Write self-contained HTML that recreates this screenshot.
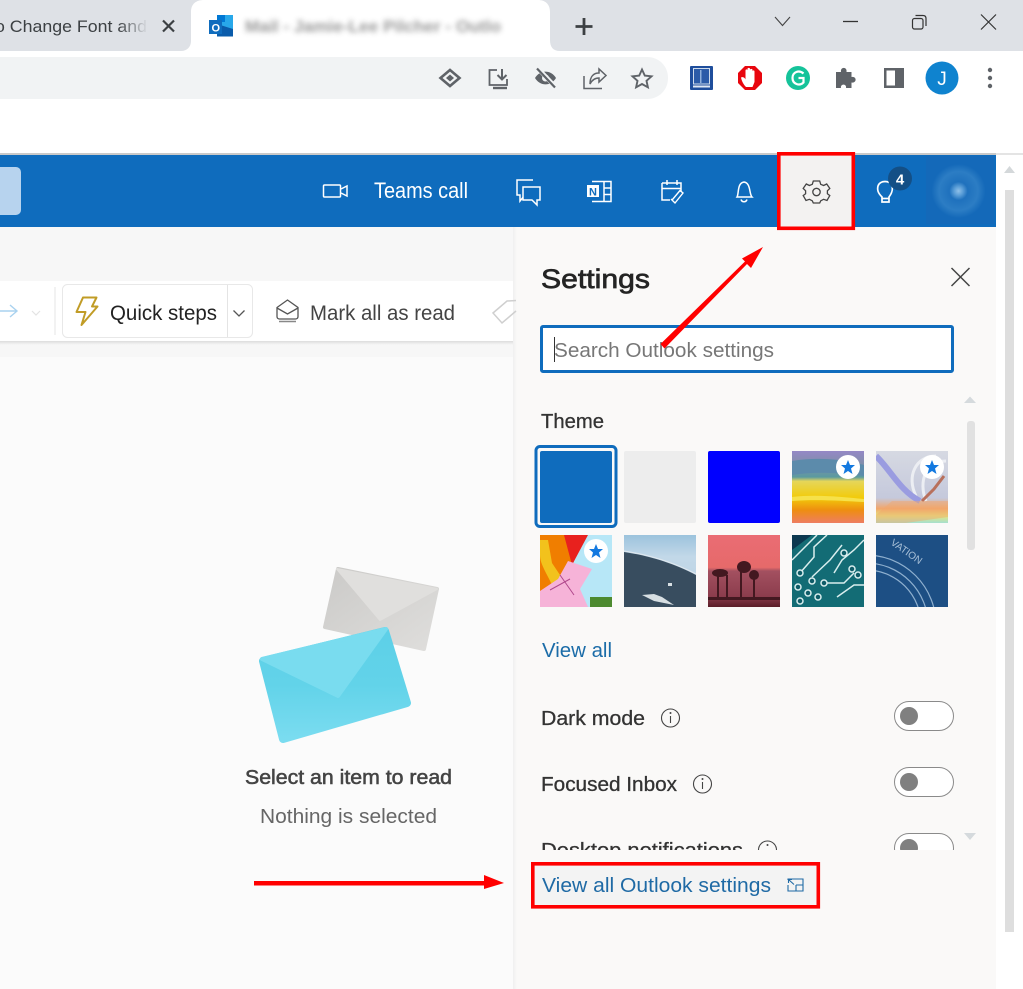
<!DOCTYPE html>
<html lang="en"><head><meta charset="utf-8"><title>Settings</title>
<style>html,body{margin:0;padding:0;background:#fff;overflow:hidden}svg{display:block}text{font-family:"Liberation Sans",sans-serif}</style></head>
<body>
<svg xmlns="http://www.w3.org/2000/svg" width="1023" height="989" viewBox="0 0 1023 989">
<defs>
<linearGradient id="fade" x1="0" x2="1" y1="0" y2="0"><stop offset="0" stop-color="#dee1e6" stop-opacity="0"/><stop offset="1" stop-color="#dee1e6"/></linearGradient>
<linearGradient id="sh" x1="0" x2="0" y1="0" y2="1"><stop offset="0" stop-color="#ddd"/><stop offset="1" stop-color="#f8f8f8"/></linearGradient>
<linearGradient id="ps" x1="0" x2="1" y1="0" y2="0"><stop offset="0" stop-color="#f0f0f0"/><stop offset="1" stop-color="#faf9f8"/></linearGradient>
<linearGradient id="g1" x1="0" x2="1" y1="0" y2="1"><stop offset="0" stop-color="#cbcac8"/><stop offset="1" stop-color="#dfdedc"/></linearGradient>
<linearGradient id="b1" x1="0" x2="0" y1="0" y2="1"><stop offset="0" stop-color="#5dd0e8"/><stop offset=".5" stop-color="#62d3e9"/><stop offset="1" stop-color="#7adcf0"/></linearGradient>
<radialGradient id="av"><stop offset="0" stop-color="#90c0e8"/><stop offset=".16" stop-color="#5c9fd8"/><stop offset=".34" stop-color="#1f71bd"/><stop offset=".72" stop-color="#2c7dc4"/><stop offset="1" stop-color="#1469b9"/></radialGradient>
<linearGradient id="t4" x1="0" x2="0" y1="0" y2="1"><stop offset="0" stop-color="#9588c6"/><stop offset=".2" stop-color="#7f8fa8"/><stop offset=".36" stop-color="#5a9aa0"/><stop offset=".42" stop-color="#e5d65a"/><stop offset=".65" stop-color="#f2cb0a"/><stop offset=".82" stop-color="#ee8e10"/><stop offset="1" stop-color="#ee7d62"/></linearGradient>
<linearGradient id="t5" x1="0" x2="0" y1="0" y2="1"><stop offset="0" stop-color="#d6d9e2"/><stop offset=".65" stop-color="#c5c9dc"/><stop offset=".8" stop-color="#f2a66b"/><stop offset=".9" stop-color="#e3e580"/><stop offset="1" stop-color="#a6e0d0"/></linearGradient>
<linearGradient id="t8" x1="0" x2="0" y1="0" y2="1"><stop offset="0" stop-color="#ea6c74"/><stop offset=".45" stop-color="#e66a6a"/><stop offset=".5" stop-color="#a35060"/><stop offset=".85" stop-color="#8c3d4d"/><stop offset="1" stop-color="#5a1e28"/></linearGradient>
<linearGradient id="t7" x1="0" x2="0" y1="0" y2="1"><stop offset="0" stop-color="#9cc3dd"/><stop offset=".3" stop-color="#c2d8e8"/><stop offset="1" stop-color="#bcd2e2"/></linearGradient>
<filter id="bl" x="-5%" y="-50%" width="110%" height="200%"><feGaussianBlur stdDeviation="2.6"/></filter>
<clipPath id="dclip"><rect x="516" y="800" width="470" height="50"/></clipPath>
</defs>

<!-- Chrome tab strip -->
<rect width="1023" height="51" fill="#dee1e6"/>
<path d="M181 51C187 51 191 47 191 41V12C191 4 196 0 204 0H538C545 0 550 4 550 12V40C550 47 553 51 560 51Z" fill="#fff"/>
<text x="-5" y="32" font-size="17" fill="#3c4043" textLength="152" lengthAdjust="spacingAndGlyphs">o Change Font and</text>
<rect x="118" y="12" width="30" height="28" fill="url(#fade)"/>
<path d="M163 20.500L174 31.500M174 20.500L163 31.500" stroke="#3c4043" stroke-width="2.200"/>
<!-- Outlook logo -->
<rect x="217" y="15" width="16" height="14" fill="#28a8ea"/><rect x="217" y="15" width="8" height="7" fill="#0078d4"/><path d="M217 24L233 29V36.500H217Z" fill="#0a5cab"/><rect x="209" y="20" width="13" height="14" fill="#0f6cbd"/>
<text x="211.500" y="31.500" font-size="11" font-weight="bold" fill="#fff">O</text>
<text x="245" y="32" font-size="17" font-weight="bold" fill="#555" filter="url(#bl)" textLength="256" lengthAdjust="spacingAndGlyphs" opacity=".6">Mail - Jamie-Lee Pilcher - Outlo</text>
<path d="M584 18V35M575.500 26.500H592.500" stroke="#3c4043" stroke-width="2.800"/>
<path d="M775 17L782.500 25.500L790 17" fill="none" stroke="#444" stroke-width="1.100"/>
<path d="M843 21.500H858" stroke="#333" stroke-width="1.300"/>
<g fill="none" stroke="#333" stroke-width="1.200"><rect x="912.500" y="18.500" width="10.500" height="10.500" rx="2"/><path d="M915.500 15.500H923C925 15.500 926 16.500 926 18.500V26"/></g>
<path d="M981 14.500L996 29.500M996 14.500L981 29.500" stroke="#333" stroke-width="1.200"/>

<!-- Omnibox -->
<path d="M0 57H647C659 57 668 66 668 78S659 99 647 99H0Z" fill="#f1f3f4"/>
<g fill="none" stroke="#5f6368">
<path d="M450 70L459.500 78L450 86L440.500 78Z" stroke-width="2.600"/><path d="M450 74.500L454 78L450 81.500L446 78Z" fill="#5f6368" stroke="none"/>
<path d="M497 70H489.500V85H507V79" stroke-width="1.800"/><path d="M502 69V79M497.500 75L502 79.500L506.500 75" stroke-width="2"/><path d="M493 88H507" stroke-width="2.400"/>
<path d="M535 78C540 69.500 551 69.500 556 78C551 86.500 540 86.500 535 78Z" fill="#5f6368" stroke="none"/><circle cx="545.500" cy="78" r="3.500" fill="#f1f3f4" stroke="none"/><path d="M538 68.500L556 87.500" stroke="#f1f3f4" stroke-width="4.500"/><path d="M537 68.500L555 87.500" stroke-width="2.200"/>
<path d="M584 76V88.500H602M590 84C590 76 594 73 599 73V69L606 75.500L599 82V78C595 78 592 80 590 84Z" stroke-width="1.500"/>
<path d="M642 69.500L644.800 75.600L651.500 76.300L646.500 80.800L647.900 87.300L642 84L636.100 87.300L637.500 80.800L632.500 76.300L639.200 75.600Z" stroke-width="1.900"/>
</g>
<!-- Extensions -->
<rect x="690" y="66" width="23" height="24" rx="1" fill="#1f4e9c"/><rect x="693.500" y="68.500" width="16" height="15.500" fill="#2b5ba8" stroke="#cfdcec"/><rect x="700" y="70" width="1.500" height="13" fill="#8fb0dc"/><rect x="693" y="85.500" width="17" height="2" fill="#dfe8f3"/>
<path d="M745 66H755L762 73V83L755 90H745L738 83V73Z" fill="#e8060e"/>
<path d="M746 87C743 84 741.500 80 741 77.500C743 76.500 745 78 745.500 79.500V70.500C745.500 69 747.500 69 747.500 70.500V69C747.500 67.500 750 67.500 750 69V70C750 68.500 752.500 68.500 752.500 70V71.500C752.500 70 754.500 70 754.500 71.500V82L752.500 87Z" fill="#fff"/>
<circle cx="798" cy="78" r="12" fill="#15c39a"/><path d="M803.500 73.500C799 69.500 792.500 72 792.500 78S799.500 86.500 803.500 82.500V78H798.500" fill="none" stroke="#fff" stroke-width="2.200"/>
<path d="M836 72H841C840 66.500 847.500 66.500 846.500 72H851.500V77C857 76 857 83.500 851.500 82.500V88H846C847 83.500 840 83.500 841 88H836Z" fill="#5f6368"/>
<rect x="884" y="68" width="20" height="20" fill="#5f6368"/><rect x="886.500" y="70.500" width="8.500" height="15" fill="#fff"/>
<circle cx="942" cy="78" r="16.500" fill="#0f83cf"/><text x="942" y="85" font-size="19" fill="#fff" text-anchor="middle">J</text>
<g fill="#5f6368"><circle cx="990" cy="70" r="2.200"/><circle cx="990" cy="78" r="2.200"/><circle cx="990" cy="86" r="2.200"/></g>

<!-- Page -->
<rect y="153" width="996" height="2" fill="#c9c9c9"/><rect x="996" y="153" width="27" height="2" fill="#e4e4e4"/>
<rect y="155" width="996" height="72" fill="#0f6cbd"/>
<rect x="-8" y="167" width="29" height="48" rx="5" fill="#b7d3ee"/>
<rect y="227" width="516" height="762" fill="#f7f7f7"/>
<rect y="357" width="516" height="632" fill="#fbfbfb"/>
<rect y="281" width="516" height="60" fill="#fff"/>
<rect y="341" width="516" height="4" fill="url(#sh)"/>
<rect x="516" y="227" width="480" height="762" fill="#faf9f8"/>
<rect x="513" y="227" width="4" height="762" fill="url(#ps)"/>
<!-- Scrollbar -->
<rect x="1005" y="190" width="9" height="742" fill="#dedede"/>
<path d="M1004 173L1009.500 166L1015 173Z" fill="#d4d8da"/>

<!-- Header icons -->
<g fill="none" stroke="#fff" stroke-width="1.500">
<rect x="323.500" y="185" width="17" height="12" rx="1"/><path d="M341 189L347 186V196L341 193"/>
<path d="M533 180H517V195H520V201L525 195" /><path d="M523 187H540V200H537V205L532 200H523Z" fill="#0f6cbd"/>
<path d="M592 181.500H611V201.500H592" /><path d="M604 182V201M604 188H611M604 194.500H611"/>
<path d="M662 183H681V192M662 183V200H670M662 188.500H681M667 180V185M677 180V185"/><path d="M671 199L675 203L683 193L680 190.500L672.500 199.500" stroke-width="1.400"/>
<path d="M737 197C739 194 737 183 744 182C751 183 749 194 752 197ZM741 199.500C742 202.500 746 202.500 747 199.500"/>
</g>
<rect x="587" y="185" width="12" height="12" fill="#fff"/><text x="589" y="195.500" font-size="11" font-weight="bold" fill="#0f6cbd">N</text>
<text x="374" y="198" font-size="22" fill="#fff" textLength="94" lengthAdjust="spacingAndGlyphs">Teams call</text>

<!-- Gear -->
<rect x="779" y="154" width="74" height="74" fill="#f3f2f1"/>
<g fill="none" stroke="#444" stroke-width="1.300"><path d="M813.300 181H819.700L820.700 184.300L823.600 185.500L826.700 184L829.800 188.400L827.400 190.800V193.700L829.800 195.600L827 200.500L823.600 199.300L820.700 200.800L819.700 203H813.300L812.300 200.800L809.400 199.300L806 200.500L803.200 195.600L805.600 193.700V190.800L803.200 188.400L806.300 184L809.400 185.500L812.300 184.300Z"/><circle cx="816.500" cy="192" r="3.700"/></g>
<rect x="778.800" y="153.800" width="74.500" height="74.500" fill="none" stroke="#f00" stroke-width="3.600"/>

<!-- Bulb + badge -->
<g fill="none" stroke="#fff" stroke-width="1.700"><path d="M882 197C878 193 877 190 878 186C880 180 890 180 892 186C893 190 892 193 889 197V202H882Z"/><path d="M882 198.500H889"/></g>
<circle cx="900" cy="178.500" r="12" fill="#134f86"/><text x="900" y="184.500" font-size="15" font-weight="bold" fill="#fff" text-anchor="middle">4</text>

<!-- Avatar -->
<rect x="926" y="156" width="68" height="68" fill="#1469b9"/>
<circle cx="958.500" cy="191" r="27" fill="url(#av)"/>

<!-- Ribbon -->
<path d="M0 311H16M10 305L17 311L10 317" fill="none" stroke="#a9d2ef" stroke-width="1.400"/>
<path d="M32 311L36 315L40 311" fill="none" stroke="#e3e3e3" stroke-width="1.200"/>
<rect x="54.500" y="287" width="1" height="48" fill="#e6e6e6"/>
<rect x="62.500" y="284.500" width="190" height="53" rx="5" fill="#fff" stroke="#e8e8e8"/>
<rect x="227" y="285" width="1" height="52" fill="#e4e4e4"/>
<path d="M83 297.500H96.500L92 306.500H97.500L81.500 325L85.500 312H76.500Z" fill="none" stroke="#c19c26" stroke-width="2" stroke-linejoin="round"/>
<text x="110" y="320" font-size="21" fill="#222" textLength="107" lengthAdjust="spacingAndGlyphs">Quick steps</text>
<path d="M233.500 310.500L239 316L244.500 310.500" fill="none" stroke="#555" stroke-width="1.300"/>
<g fill="none" stroke="#555" stroke-width="1.300"><path d="M277 307.500L287.500 300L298 307.500V316.500C298 318 297 319 295.500 319H279.500C278 319 277 318 277 316.500Z"/><path d="M277 308L287.500 314L298 308"/><path d="M279 321.500H296" stroke="#888" stroke-width="1.500"/></g>
<text x="310" y="320" font-size="21" fill="#444" textLength="145" lengthAdjust="spacingAndGlyphs">Mark all as read</text>
<path d="M516 300.500L507 301L493 313L502 323L516 311" fill="none" stroke="#cfcfcf" stroke-width="1.500"/>

<!-- Envelopes -->
<path d="M338 569L437 589L424 649L325 627Z" fill="url(#g1)" stroke="url(#g1)" stroke-width="4" stroke-linejoin="round"/>
<path d="M337 569L437 589L380 620Z" fill="#e0dfdd" stroke="#e0dfdd" stroke-width="2" stroke-linejoin="round"/>
<path d="M263 661L385 631L407 703L283 739Z" fill="url(#b1)" stroke="url(#b1)" stroke-width="8" stroke-linejoin="round"/>
<path d="M262 659L386 629L338 696Z" fill="#79dcef" stroke="#79dcef" stroke-width="4" stroke-linejoin="round"/>
<text x="245" y="784" font-size="20" fill="#444" stroke="#444" stroke-width=".55" textLength="207" lengthAdjust="spacingAndGlyphs">Select an item to read</text>
<text x="260" y="823" font-size="20" fill="#666" textLength="177" lengthAdjust="spacingAndGlyphs">Nothing is selected</text>

<!-- Settings panel -->
<text x="541" y="288" font-size="27" fill="#242424" stroke="#242424" stroke-width=".7" textLength="109" lengthAdjust="spacingAndGlyphs">Settings</text>
<path d="M951.500 268L969.500 286M969.500 268L951.500 286" stroke="#444" stroke-width="1.500"/>
<rect x="541.500" y="326.500" width="411" height="45" rx="1.500" fill="#fff" stroke="#0f6cbd" stroke-width="3"/>
<rect x="554" y="337" width="1" height="25" fill="#333"/>
<text x="554" y="357" font-size="20" fill="#777" textLength="220" lengthAdjust="spacingAndGlyphs">Search Outlook settings</text>
<text x="541" y="428" font-size="20.500" fill="#333" stroke="#333" stroke-width=".3" textLength="63" lengthAdjust="spacingAndGlyphs">Theme</text>
<path d="M964 403L970 396.500L976 403Z" fill="#d5dadd"/>
<rect x="967" y="421" width="8" height="129" rx="3" fill="#e1e1e1"/>
<path d="M964 833H976L970 840Z" fill="#d5dadd"/>

<!-- Themes -->
<rect x="536" y="446.500" width="80" height="80" rx="4" fill="none" stroke="#0f6cbd" stroke-width="3"/>
<rect x="540" y="451" width="72" height="72" rx="2" fill="#0f6cbd"/>
<rect x="624" y="451" width="72" height="72" rx="2" fill="#ededed"/>
<rect x="708" y="451" width="72" height="72" rx="2" fill="#0000ff"/>
<svg x="792" y="451" width="72" height="72"><rect width="72" height="72" fill="url(#t4)"/><path d="M0 10C25 6 50 8 72 14V25C50 22 25 20 0 24Z" fill="#5c8bab"/><path d="M0 46C25 43 50 46 72 48V51C50 50 25 48 0 50Z" fill="#f6e14a"/></svg>
<svg x="876" y="451" width="72" height="72"><rect width="72" height="72" fill="url(#t5)"/><path d="M60 5C40 5 30 25 40 45M70 10C50 10 42 30 50 50" fill="none" stroke="#eceef3" stroke-width="3"/><path d="M0 5C14 18 24 40 44 50" fill="none" stroke="#9a9ce0" stroke-width="6"/><path d="M68 25L58 38L46 50" fill="none" stroke="#b8705c" stroke-width="3"/><path d="M0 64L16 50L72 50V66L30 72H0Z" fill="#f2a66b" opacity=".45"/></svg>
<svg x="540" y="535" width="72" height="72"><rect width="72" height="72" fill="#b7e7f7"/><path d="M0 0H46L34 26L20 60L0 60Z" fill="#f07e00"/><path d="M24 0H48L32 30Z" fill="#e8211e"/><path d="M0 5H8L12 28L28 52L18 62C8 40 0 30 0 20Z" fill="#f2c21c"/><path d="M0 56L18 44L28 26L52 34L40 54L48 72H0Z" fill="#f6b3d8"/><rect x="50" y="62" width="22" height="10" fill="#4d8a30"/><path d="M20 40L34 60M10 55L30 44" stroke="#b0488c" fill="none"/></svg>
<svg x="624" y="535" width="72" height="72"><rect width="72" height="72" fill="url(#t7)"/><path d="M0 17C20 20 45 26 72 40V72H0Z" fill="#384d5f"/><path d="M0 16C20 19 45 25 72 39" fill="none" stroke="#e0e8ee" stroke-width="1"/><path d="M18 60L30 59L38 62L50 70L30 66Z" fill="#d7dfe3"/><rect x="44" y="48" width="4" height="3" fill="#d7dfe3"/></svg>
<svg x="708" y="535" width="72" height="72"><rect width="72" height="72" fill="url(#t8)"/><g fill="#431820"><ellipse cx="36" cy="32" rx="7" ry="6"/><ellipse cx="46" cy="40" rx="5" ry="5"/><ellipse cx="12" cy="38" rx="8" ry="4"/><rect x="32" y="34" width="2" height="30"/><rect x="45" y="42" width="2" height="22"/><rect x="9" y="40" width="2" height="24"/><rect x="18" y="40" width="2" height="24"/><rect x="0" y="62" width="72" height="3"/></g></svg>
<svg x="792" y="535" width="72" height="72"><rect width="72" height="72" fill="#136c75"/><path d="M0 0H20L0 15Z" fill="#0c3850"/><g fill="none" stroke="#d9eeee" stroke-width="1.500"><path d="M0 25L25 0M8 38L22 22V12L35 0M20 42L38 25L50 10M42 38L50 25L62 15L72 5M32 48L52 48L62 38M45 62L62 50L72 50"/></g><g fill="#0e5c68" stroke="#d9eeee" stroke-width="1.500"><circle cx="8" cy="38" r="3"/><circle cx="20" cy="46" r="3"/><circle cx="32" cy="48" r="3"/><circle cx="52" cy="18" r="3"/><circle cx="60" cy="34" r="3"/><circle cx="66" cy="40" r="3"/><circle cx="6" cy="52" r="3"/><circle cx="16" cy="58" r="3"/><circle cx="26" cy="62" r="3"/><circle cx="8" cy="66" r="3"/></g></svg>
<svg x="876" y="535" width="72" height="72"><rect width="72" height="72" fill="#1d4f84"/><g fill="none" stroke="#8fb0cf" stroke-width="1.200"><circle cx="-10" cy="90" r="55"/><circle cx="-10" cy="90" r="62"/><circle cx="-10" cy="90" r="70"/></g><text x="14" y="9" font-size="10" fill="#a8c0d8" transform="rotate(35 14 9)">VATION</text></svg>
<g><circle cx="848" cy="467" r="12" fill="#fff"/><circle cx="932" cy="467" r="12" fill="#fff"/><circle cx="596" cy="551" r="12" fill="#fff"/>
<g fill="#1379e0"><path d="M848 460L850 465H855L851 468.500L852.500 474L848 471L843.500 474L845 468.500L841 465H846Z"/><path d="M932 460L934 465H939L935 468.500L936.500 474L932 471L927.500 474L929 468.500L925 465H930Z"/><path d="M596 544L598 549H603L599 552.500L600.500 558L596 555L591.500 558L593 552.500L589 549H594Z"/></g></g>

<text x="542" y="657" font-size="20" fill="#1b6ca8" textLength="70" lengthAdjust="spacingAndGlyphs">View all</text>
<text x="541" y="725" font-size="20" fill="#333" stroke="#333" stroke-width=".3" textLength="104" lengthAdjust="spacingAndGlyphs">Dark mode</text>
<text x="541" y="791" font-size="20" fill="#333" stroke="#333" stroke-width=".3" textLength="136" lengthAdjust="spacingAndGlyphs">Focused Inbox</text>
<g fill="none" stroke="#444" stroke-width="1.100"><circle cx="670.500" cy="718" r="9"/><circle cx="702.500" cy="784" r="9"/><path d="M670.500 716V723M702.500 782V789"/></g>
<g fill="#444"><circle cx="670.500" cy="713" r="1"/><circle cx="702.500" cy="779" r="1"/></g>
<g fill="#fff" stroke="#8a8a8a" stroke-width="1"><rect x="894.500" y="701.500" width="59" height="29" rx="14.500"/><rect x="894.500" y="767.500" width="59" height="29" rx="14.500"/></g>
<g fill="#808080"><circle cx="909" cy="716" r="9"/><circle cx="909" cy="782" r="9"/></g>
<g clip-path="url(#dclip)">
<text x="541" y="857" font-size="20" fill="#333" stroke="#333" stroke-width=".3" textLength="202" lengthAdjust="spacingAndGlyphs">Desktop notifications</text>
<circle cx="767.500" cy="850" r="9" fill="none" stroke="#444" stroke-width="1.100"/><circle cx="767.500" cy="845" r="1" fill="#444"/>
<rect x="894.500" y="833.500" width="59" height="29" rx="14.500" fill="#fff" stroke="#8a8a8a"/><circle cx="909" cy="848" r="9" fill="#808080"/>
</g>

<!-- View all link -->
<rect x="533" y="864" width="285" height="43" fill="#f3f3f3"/>
<text x="542" y="892" font-size="20" fill="#1f6aa5" textLength="229" lengthAdjust="spacingAndGlyphs">View all Outlook settings</text>
<g fill="none" stroke="#1f6aa5" stroke-width="1.100"><path d="M788 880V879H803V891H788V885M796 885H803M796 885V891"/><path d="M788.500 879.500L794 884.500M788.500 883V879.500H792"/></g>
<rect x="532.800" y="863.800" width="285.500" height="43" fill="none" stroke="#f00" stroke-width="3.600"/>

<!-- Arrows -->
<path d="M660.500 344L664.500 348.500L747 264L751 268L763 247L742 258.500L745 261.500Z" fill="#f00"/>
<path d="M254 881H484V875L504 883L484 889V885.500H254Z" fill="#f00"/>
</svg>
</body></html>
